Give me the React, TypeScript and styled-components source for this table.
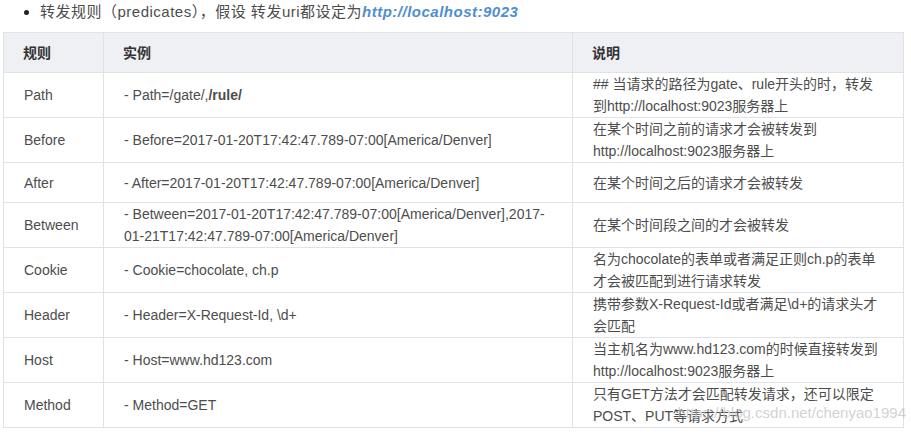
import styled, { createGlobalStyle } from 'styled-components'

const colors = {
  ink: '#4d4d4d',
  head: '#333333',
  border: '#dfe2e8',
  headBg: '#eff0f4',
  link: '#4f8ecf',
};

const GlobalStyle = createGlobalStyle`
  html, body {
    margin: 0;
    padding: 0;
    background: #ffffff;
  }
  body {
    font-family: 'Liberation Sans', 'Noto Sans CJK SC', sans-serif;
    color: ${colors.ink};
  }
`;

const Page = styled.main`
  position: relative;
  width: 911px;
  height: 432px;
  overflow: hidden;
  padding: 0 0 0 3px;
  box-sizing: border-box;
`;

const List = styled.ul`
  margin: 0;
  padding: 0 0 0 37px;
  list-style: disc;
  font-size: 15px;
  line-height: 24px;
  letter-spacing: 0.5px;
  color: ${colors.ink};

  li::marker {
    color: #222;
  }
`;

const Link = styled.a`
  color: ${colors.link};
  font-weight: 700;
  font-style: italic;
  text-decoration: none;
`;

const Table = styled.table`
  margin-top: 8px;
  width: 901px;
  border-collapse: collapse;
  table-layout: fixed;
  font-size: 14px;
  line-height: 22px;
`;

const Col = styled.col<{ $w?: number }>`
  width: ${(p) => (p.$w ? `${p.$w}px` : 'auto')};
`;

const Th = styled.th`
  height: 39px;
  padding: 0 19px;
  background: ${colors.headBg};
  border: 1px solid ${colors.border};
  text-align: left;
  font-weight: 700;
  color: ${colors.head};
  vertical-align: middle;
`;

const Td = styled.td`
  height: 39px;
  padding: 0 20px;
  border: 1px solid ${colors.border};
  vertical-align: middle;
  color: ${colors.ink};
  white-space: nowrap;
  overflow: hidden;
`;

const Watermark = styled.div`
  position: absolute;
  right: 5px;
  bottom: 10px;
  font-size: 15px;
  line-height: 18px;
  color: rgba(190, 190, 190, 0.7);
  pointer-events: none;
  white-space: nowrap;
`;

type Row = { rule: string; example: React.ReactNode; note: React.ReactNode };

const rows: Row[] = [
  {
    rule: 'Path',
    example: (
      <>
        - Path=/gate/,<b>/rule/</b>
      </>
    ),
    note: (
      <>
        ## 当请求的路径为gate、rule开头的时，转发
        <br />
        到http://localhost:9023服务器上
      </>
    ),
  },
  {
    rule: 'Before',
    example: '- Before=2017-01-20T17:42:47.789-07:00[America/Denver]',
    note: (
      <>
        在某个时间之前的请求才会被转发到
        <br />
        http://localhost:9023服务器上
      </>
    ),
  },
  {
    rule: 'After',
    example: '- After=2017-01-20T17:42:47.789-07:00[America/Denver]',
    note: '在某个时间之后的请求才会被转发',
  },
  {
    rule: 'Between',
    example: (
      <>
        - Between=2017-01-20T17:42:47.789-07:00[America/Denver],2017-
        <br />
        01-21T17:42:47.789-07:00[America/Denver]
      </>
    ),
    note: '在某个时间段之间的才会被转发',
  },
  {
    rule: 'Cookie',
    example: '- Cookie=chocolate, ch.p',
    note: (
      <>
        名为chocolate的表单或者满足正则ch.p的表单
        <br />
        才会被匹配到进行请求转发
      </>
    ),
  },
  {
    rule: 'Header',
    example: '- Header=X-Request-Id, \\d+',
    note: (
      <>
        携带参数X-Request-Id或者满足\d+的请求头才
        <br />
        会匹配
      </>
    ),
  },
  {
    rule: 'Host',
    example: '- Host=www.hd123.com',
    note: (
      <>
        当主机名为www.hd123.com的时候直接转发到
        <br />
        http://localhost:9023服务器上
      </>
    ),
  },
  {
    rule: 'Method',
    example: '- Method=GET',
    note: (
      <>
        只有GET方法才会匹配转发请求，还可以限定
        <br />
        POST、PUT等请求方式
      </>
    ),
  },
];

function App() {
  return (
    <Page>
      <GlobalStyle />
      <List>
        <li>
          转发规则（predicates），假设 转发uri都设定为<Link>http://localhost:9023</Link>
        </li>
      </List>
      <Table>
        <colgroup>
          <Col $w={100} />
          <Col $w={469} />
          <Col />
        </colgroup>
        <thead>
          <tr>
            <Th>规则</Th>
            <Th>实例</Th>
            <Th>说明</Th>
          </tr>
        </thead>
        <tbody>
          {rows.map((r) => (
            <tr key={r.rule}>
              <Td>{r.rule}</Td>
              <Td>{r.example}</Td>
              <Td>{r.note}</Td>
            </tr>
          ))}
        </tbody>
      </Table>
      <Watermark>https://blog.csdn.net/chenyao1994</Watermark>
    </Page>
  );
}

export default App
